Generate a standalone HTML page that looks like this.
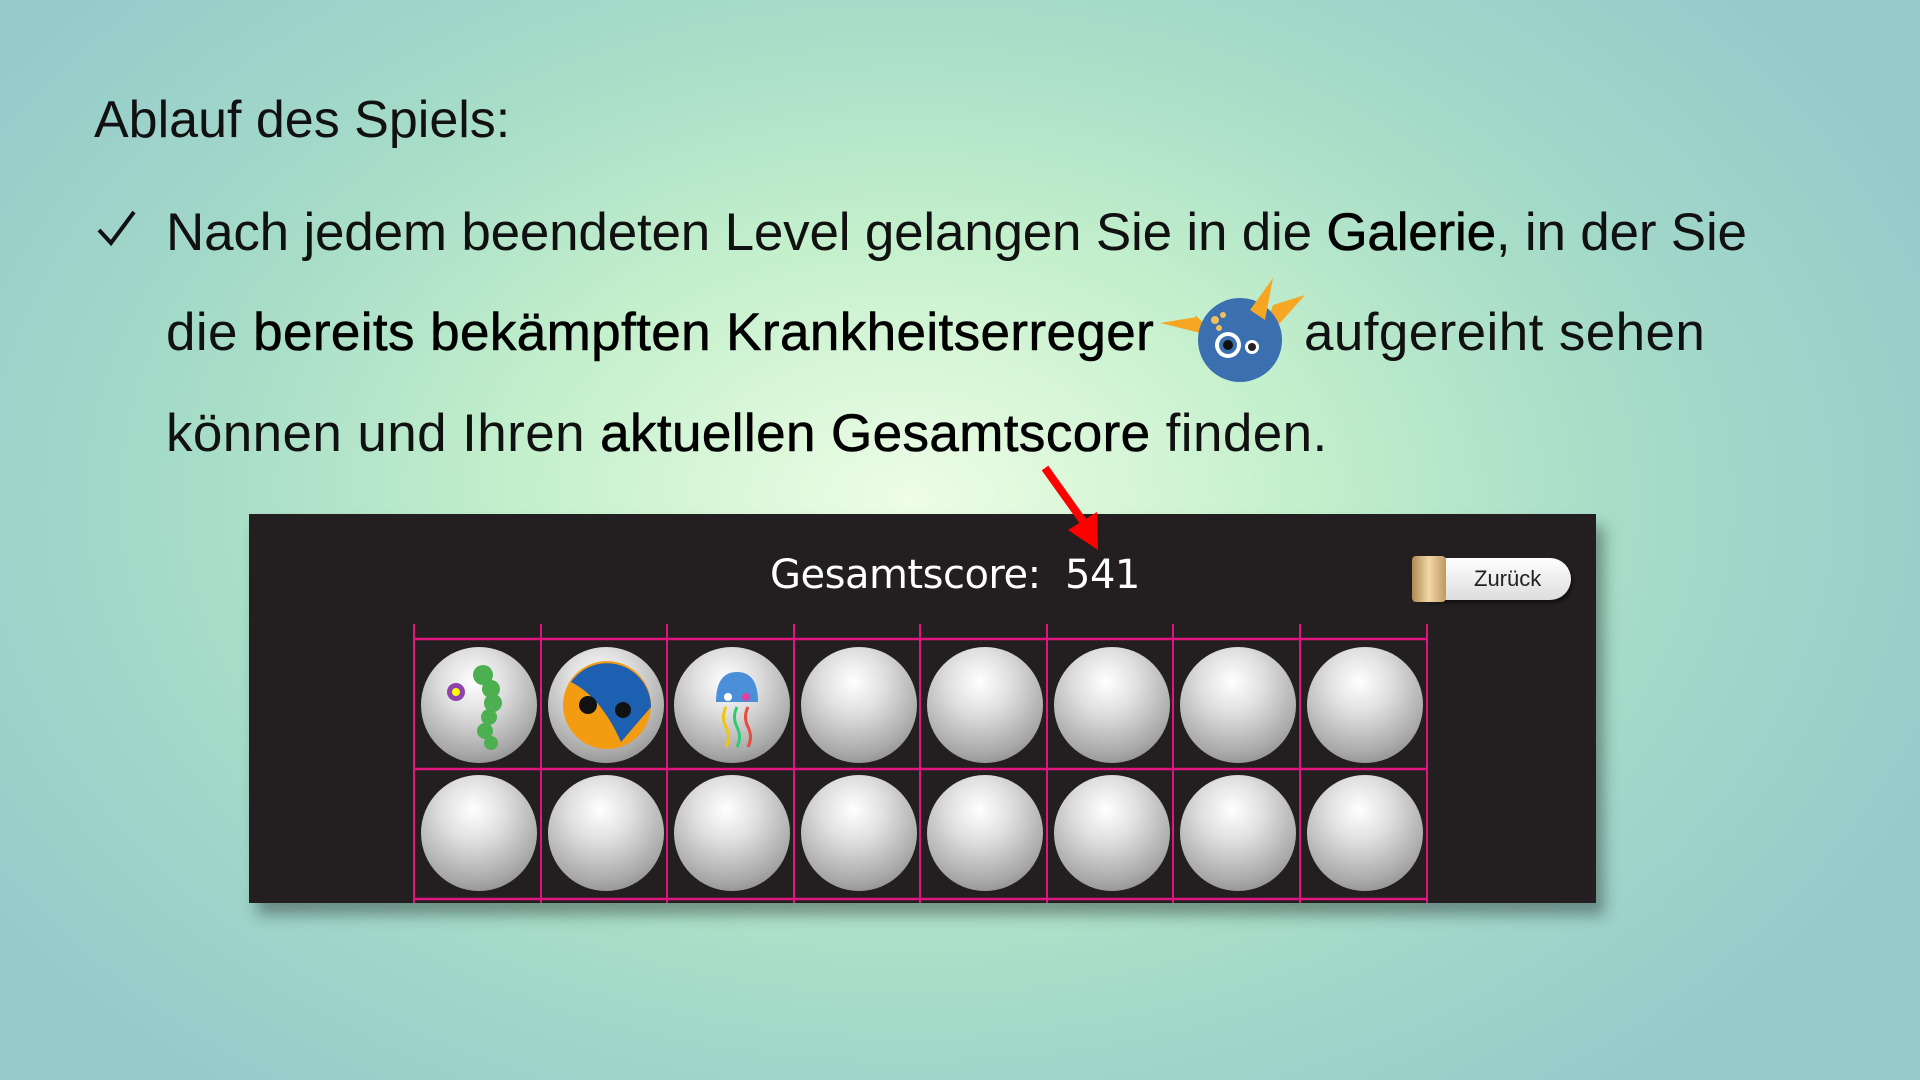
<!DOCTYPE html>
<html><head><meta charset="utf-8"><style>
body{margin:0;width:1920px;height:1080px;overflow:hidden;position:relative;font-family:"Liberation Sans",sans-serif;
background:radial-gradient(ellipse 1100px 750px at 910px 500px,#eefde6 0%,#c4f0cc 35%,#a6dcc8 65%,#95cbcb 100%);}
.t{position:absolute;color:#111;white-space:nowrap}
b{font-weight:normal;color:#000;-webkit-text-stroke:0.6px #000}
.panel{position:absolute;left:249px;top:514px;width:1347px;height:389px;background:#231f20;box-shadow:8px 12px 14px rgba(0,0,0,.35);overflow:hidden}
.ball{position:absolute;width:116px;height:116px;border-radius:50%;background:radial-gradient(circle at 45% 30%,#fff 0%,#e0e0e0 30%,#a8a8a8 70%,#707070 100%)}
</style></head><body>
<div class="t" style="left:94px;top:90px;font-size:52px">Ablauf des Spiels:</div>
<svg style="position:absolute;left:96px;top:208px" width="42" height="42"><path d="M3 22 L15 35 L38 4" stroke="#111" stroke-width="4" fill="none"/></svg>
<div class="t" style="left:166px;top:202px;font-size:53px;letter-spacing:-0.2px">Nach jedem beendeten Level gelangen Sie in die <b>Galerie</b>, in der Sie</div>
<div class="t" style="left:166px;top:302px;font-size:53px;letter-spacing:0.4px">die <b>bereits bekämpften Krankheitserreger</b></div>
<div class="t" style="left:1304px;top:302px;font-size:53px;letter-spacing:0.4px">aufgereiht sehen</div>
<div class="t" style="left:166px;top:403px;font-size:53px;letter-spacing:0.4px">können und Ihren <b>aktuellen Gesamtscore</b> finden.</div>
<svg style="position:absolute;left:1155px;top:275px" width="150" height="115">
<path d="M5 48 L42 42 L62 62 Z M40 40 L60 58 L45 62 Z" fill="#f5a623"/>
<path d="M150 20 L118 30 L108 60 L125 48 Z" fill="#f5a623"/>
<circle cx="85" cy="65" r="42" fill="#3a6fb0"/>
<path d="M95 35 L118 3 L110 45 Z" fill="#f5a623"/>
<circle cx="73" cy="70" r="13" fill="#fff"/><circle cx="73" cy="70" r="9" fill="#3a6fb0"/><circle cx="73" cy="70" r="5" fill="#111"/>
<circle cx="97" cy="72" r="7" fill="#fff"/><circle cx="97" cy="72" r="4" fill="#222"/>
<circle cx="60" cy="45" r="4" fill="#f0c060"/><circle cx="68" cy="40" r="3" fill="#f0c060"/><circle cx="64" cy="53" r="3" fill="#f0c060"/>
</svg>
<div class="panel">
<div class="t" style="left:521px;top:38px;color:#fff;font-size:40px;font-family:'DejaVu Sans',sans-serif;letter-spacing:-0.5px">Gesamtscore:&nbsp; 541</div>
<div style="position:absolute;left:1163px;top:44px;width:159px;height:42px;border-radius:21px;background:linear-gradient(#fff,#ddd);box-shadow:2px 3px 3px rgba(0,0,0,.5)"></div>
<div style="position:absolute;left:1163px;top:42px;width:34px;height:46px;border-radius:4px;background:linear-gradient(90deg,#b08850,#f0d8a8,#c09860)"></div>
<div class="t" style="left:1225px;top:52px;font-size:22px;color:#222">Zurück</div>
<svg style="position:absolute;left:0;top:0" width="1347" height="389">
<g stroke="#e0157f" stroke-width="2.5">
<line x1="165" y1="125" x2="1178" y2="125"/><line x1="165" y1="255" x2="1178" y2="255"/><line x1="165" y1="385" x2="1178" y2="385"/>
</g><g stroke="#e0157f" stroke-width="2">
<line x1="165" y1="110" x2="165" y2="389"/><line x1="292" y1="110" x2="292" y2="389"/><line x1="418" y1="110" x2="418" y2="389"/><line x1="545" y1="110" x2="545" y2="389"/><line x1="671" y1="110" x2="671" y2="389"/><line x1="798" y1="110" x2="798" y2="389"/><line x1="924" y1="110" x2="924" y2="389"/><line x1="1051" y1="110" x2="1051" y2="389"/><line x1="1178" y1="110" x2="1178" y2="389"/>
</g></svg>
<div class="ball" style="left:172px;top:133px"></div><div class="ball" style="left:299px;top:133px"></div><div class="ball" style="left:425px;top:133px"></div><div class="ball" style="left:552px;top:133px"></div><div class="ball" style="left:678px;top:133px"></div><div class="ball" style="left:805px;top:133px"></div><div class="ball" style="left:931px;top:133px"></div><div class="ball" style="left:1058px;top:133px"></div>
<div class="ball" style="left:172px;top:261px"></div><div class="ball" style="left:299px;top:261px"></div><div class="ball" style="left:425px;top:261px"></div><div class="ball" style="left:552px;top:261px"></div><div class="ball" style="left:678px;top:261px"></div><div class="ball" style="left:805px;top:261px"></div><div class="ball" style="left:931px;top:261px"></div><div class="ball" style="left:1058px;top:261px"></div>
<svg style="position:absolute;left:172px;top:133px" width="500" height="116">
<g fill="#4caf50"><circle cx="62" cy="28" r="10"/><circle cx="70" cy="42" r="9"/><circle cx="72" cy="56" r="9"/><circle cx="68" cy="70" r="8"/><circle cx="64" cy="84" r="8"/><circle cx="70" cy="96" r="7"/></g>
<circle cx="35" cy="45" r="9" fill="#8e44ad"/><circle cx="35" cy="45" r="4" fill="#ff0"/>
<circle cx="186" cy="58" r="44" fill="#f39c12"/><path d="M150 35 A44 44 0 0 1 230 60 L200 95 Q180 50 150 35Z" fill="#1d5fb0"/>
<circle cx="167" cy="58" r="9" fill="#111"/><circle cx="202" cy="63" r="8" fill="#111"/>
<path d="M295 55 Q295 25 316 25 Q337 25 337 55 Z" fill="#4a8fd8"/><circle cx="307" cy="50" r="4" fill="#fff"/><circle cx="325" cy="50" r="4" fill="#e040a0"/>
<g stroke-width="3" fill="none"><path d="M305 60 q-5 10 0 20 q5 10 0 20" stroke="#f1c40f"/><path d="M316 60 q-5 10 0 20 q5 10 0 20" stroke="#2ecc71"/><path d="M327 60 q-5 10 0 20 q5 10 0 20" stroke="#e74c3c"/></g>
</svg>
</div>
<svg style="position:absolute;left:1035px;top:462px" width="75" height="95"><line x1="10" y1="6" x2="50" y2="62" stroke="#f00" stroke-width="8"/><path d="M33 68 L63 88 L62 50 Z" fill="#f00"/></svg>
</body></html>
